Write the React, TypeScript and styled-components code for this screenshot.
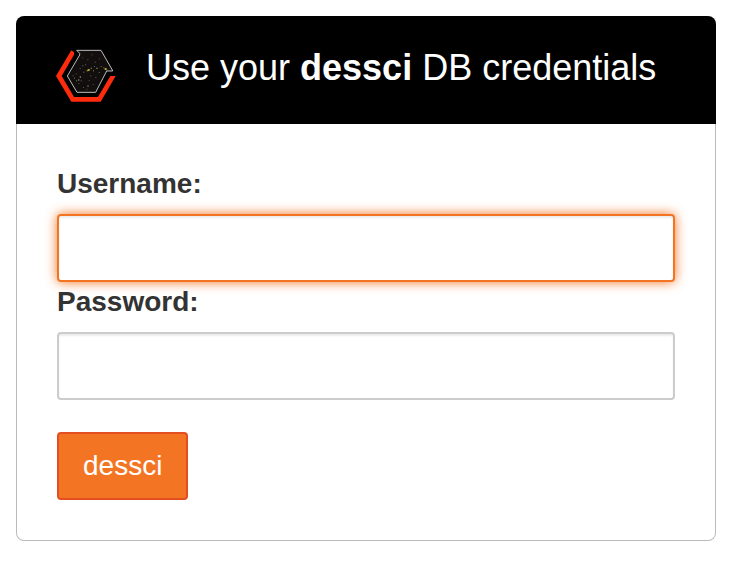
import React from "react";
import styled, { createGlobalStyle, css } from "styled-components";

const GlobalStyle = createGlobalStyle`
  *, *::before, *::after { box-sizing: border-box; }
  body {
    margin: 0;
    background: #fff;
    color: #333;
    font-family: "Liberation Sans", Arial, sans-serif;
    font-size: 28px;
    line-height: 40px;
  }
`;

const Page = styled.main`
  padding: 16px;
`;

const Header = styled.header`
  display: flex;
  align-items: flex-start;
  gap: 30px;
  padding: 32px 40px 16px;
  background: #000;
  color: #fff;
  border-radius: 8px 8px 0 0;
`;

const LogoSvg = styled.svg`
  flex: none;
  width: 60px;
  height: 60px;
`;

const Title = styled.h1`
  margin: 0;
  font-size: 36px;
  font-weight: normal;
  line-height: 40px;
`;

const Form = styled.form`
  display: flex;
  flex-direction: column;
  padding: 40px;
  border: 1px solid #bbb;
  border-top: 0;
  border-radius: 0 0 8px 8px;
`;

const Label = styled.label`
  margin-bottom: 10px;
  font-weight: bold;
`;

const highlighted = css`
  border-color: #f37524;
  box-shadow: inset 0 2px 2px rgba(0, 0, 0, 0.075), 0 0 12px #f37524;
`;

const TextInput = styled.input<{ $active?: boolean }>`
  width: 100%;
  height: 68px;
  padding: 12px 24px;
  border: 2px solid #ccc;
  border-radius: 4px;
  background: #fff;
  color: #555;
  font: inherit;
  outline: 0;
  box-shadow: inset 0 2px 2px rgba(0, 0, 0, 0.075);
  ${(p) => p.$active && highlighted}
  &:focus { ${highlighted} }
`;

const SubmitButton = styled.button`
  align-self: flex-start;
  margin-top: 32px;
  padding: 12px 24px;
  border: 2px solid #e34f21;
  border-radius: 4px;
  background: #f37524;
  color: #fff;
  font: inherit;
  cursor: pointer;
`;

const stars = [
  [111, 64, 3, "#8a9450"], [95, 60, 6, "#b0a62c"], [92, 63, 4, "#7e8b28"], [104, 56, 4, "#62705a"],
  [121, 56, 4, "#7b8848"], [146, 57, 6, "#b4a52e"], [142, 55, 3, "#788734"], [134, 51, 3, "#667a3e"],
  [151, 62, 3, "#777"], [114, 51, 3, "#536c58"], [82, 68, 3, "#778"], [71, 82, 4, "#8d8d7c"],
  [54, 86, 3, "#777"], [50, 79, 3, "#675f5f"], [60, 94, 3, "#686"], [66, 91, 4, "#888"],
  [74, 94, 3, "#667"], [67, 102, 3, "#555"], [94, 109, 4, "#777"], [91, 119, 3, "#555"],
  [110, 105, 3, "#555"], [118, 84, 3, "#656"], [103, 79, 3, "#665"], [87, 46, 3, "#665"],
  [116, 38, 3, "#566"], [94, 31, 3, "#555"], [79, 25, 3, "#445"], [106, 16, 3, "#555"],
  [129, 28, 3, "#445"], [128, 69, 3, "#665"], [71, 57, 3, "#565"], [79, 49, 3, "#776"],
  [59, 73, 3, "#655"], [98, 93, 3, "#544"], [81, 114, 3, "#555"],
] as const;

function Logo() {
  return (
    <LogoSvg viewBox="0 -3 180 180" aria-hidden="true">
      <path d="M46 4 0 81 46 158H134L179 81H163L126 144H54L17 81 54 17V9L49 6Z" fill="#ff2b0d" />
      <path d="M62 4H135L169 63 170 66H152L119 130H63L34 81 71 18 71 13Z" fill="#120e0e" />
      {stars.map(([x, y, size, color]) => (
        <rect key={`${x}-${y}`} x={x} y={y} width={size} height={size} fill={color} />
      ))}
      <path d="M62 4H135L169 63 170 66H152L119 130H63L34 81 71 18 71 13Z" fill="none" stroke="#bcbcbc" strokeWidth="3" />
    </LogoSvg>
  );
}

export default function App() {
  return (
    <>
      <GlobalStyle />
      <Page>
        <Header>
          <Logo />
          <Title>Use your <strong>dessci</strong> DB credentials</Title>
        </Header>
        <Form onSubmit={(e) => e.preventDefault()}>
          <Label htmlFor="username">Username:</Label>
          <TextInput id="username" type="text" autoComplete="username" $active />
          <Label htmlFor="password">Password:</Label>
          <TextInput id="password" type="password" autoComplete="current-password" />
          <SubmitButton type="submit">dessci</SubmitButton>
        </Form>
      </Page>
    </>
  );
}
